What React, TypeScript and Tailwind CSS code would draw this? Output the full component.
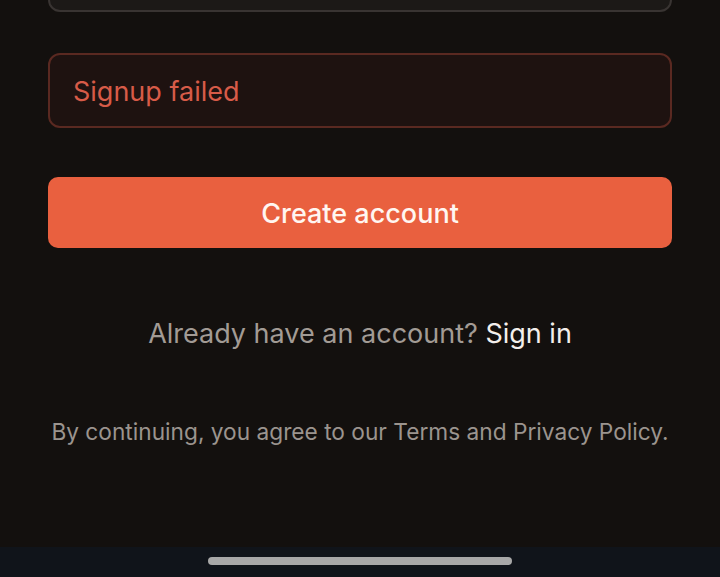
export default function App() {
  return (
    <div
      className="h-[577px] w-full flex flex-col overflow-hidden bg-[#13100e]"
      style={{ fontFamily: 'Inter, "Noto Sans", sans-serif' }}
    >
      <div className="flex-1 flex flex-col px-12">
        {/* email / password field, scrolled mostly out of view */}
        <div className="mt-[-44px] h-[56px] rounded-xl border-2 border-[#393432] bg-[#1c1917]" />

        <div className="mt-[41px] h-[75px] flex items-center px-[23px] pt-1 rounded-xl border-2 border-[#5a2921] bg-[#1e1210]">
          <span className="text-[27px] text-[#d75b48]">Signup failed</span>
        </div>

        <button className="mt-[49px] h-[71px] pt-1 rounded-[10px] bg-[#e9603f] text-[27px] font-medium text-[#fff6f1]">
          Create account
        </button>

        <p className="mt-[66px] text-center text-[27px] text-[#a29b95]">
          Already have an account? <span className="text-[#f3efec]">Sign in</span>
        </p>

        <p className="mt-[60px] text-center text-[22.7px] text-[#9b948e]">
          By continuing, you agree to our Terms and Privacy Policy.
        </p>
      </div>

      <div className="h-[30px] flex justify-center pt-[10px] bg-[#10141a]">
        <div className="w-[304px] h-[8px] rounded-full bg-[#a8a8a8]" />
      </div>
    </div>
  );
}
